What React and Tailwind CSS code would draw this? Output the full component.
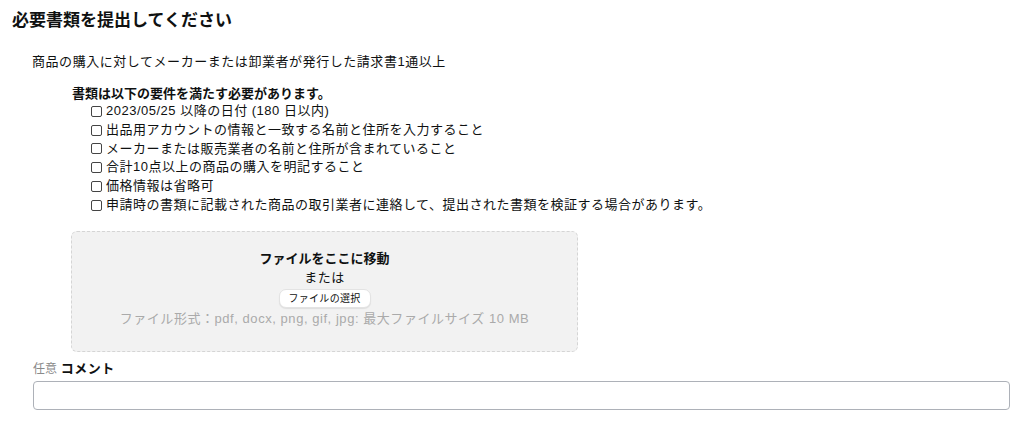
export default function App() {
  const items = [
    "2023/05/25 以降の日付 (180 日以内)",
    "出品用アカウントの情報と一致する名前と住所を入力すること",
    "メーカーまたは販売業者の名前と住所が含まれていること",
    "合計10点以上の商品の購入を明記すること",
    "価格情報は省略可",
    "申請時の書類に記載された商品の取引業者に連絡して、提出された書類を検証する場合があります。",
  ];
  return (
    <div
      className="w-[1024px] h-[423px] bg-white text-[#0f1111] overflow-hidden"
      style={{ fontFamily: '"Liberation Sans", "Noto Sans CJK JP", sans-serif' }}
    >
      <div className="pl-[12px] pt-[9px]">
        <h1 className="text-[17px] leading-[24px] font-bold">必要書類を提出してください</h1>
      </div>
      <div className="pl-[32px] mt-[20px] text-[13px] leading-[18px] tracking-[0.55px]">
        商品の購入に対してメーカーまたは卸業者が発行した請求書1通以上
      </div>
      <div className="pl-[72px] mt-[15px] text-[13px]">
        <div className="font-bold leading-[16px]">書類は以下の要件を満たす必要があります。</div>
        <ul className="pl-[19px] tracking-[0.5px]">
          {items.map((t) => (
            <li key={t} className="flex items-center leading-[18.8px]">
              <span className="inline-block w-[11px] h-[11px] border border-[#444] rounded-[2px] mr-[4px] shrink-0" />
              <span>{t}</span>
            </li>
          ))}
        </ul>
      </div>
      <div className="pl-[71px] mt-[16px]">
        <div className="w-[507px] h-[121px] border border-dashed border-[#d5d5d5] rounded-[6px] bg-[#f2f2f2] flex flex-col items-center pt-[18px]">
          <div className="text-[13px] leading-[18px] font-bold">ファイルをここに移動</div>
          <div className="text-[13px] leading-[18px] mt-[1px] tracking-[0.5px]">または</div>
          <button className="mt-[2px] h-[19px] w-[92px] rounded-[7px] bg-white border border-[#e3e3e3] shadow-[0_1px_1px_rgba(0,0,0,0.08)] text-[10px] leading-[17px] tracking-[0.3px] text-[#0f1111]">
            ファイルの選択
          </button>
          <div className="text-[13px] leading-[18px] mt-[2px] tracking-[0.55px] text-[#aaaaaa]">
            ファイル形式：pdf, docx, png, gif, jpg: 最大ファイルサイズ 10 MB
          </div>
        </div>
      </div>
      <div className="pl-[33px] pr-[14px] mt-[9px]">
        <div className="text-[13px] leading-[16px]">
          <span className="text-[#8a8a8a] text-[12px]">任意</span> <span className="font-bold tracking-[0.5px]">コメント</span>
        </div>
        <input
          className="mt-[4px] block w-full h-[29px] border border-[#adb1b8] rounded-[4px] bg-white outline-none"
          type="text"
        />
      </div>
    </div>
  );
}
